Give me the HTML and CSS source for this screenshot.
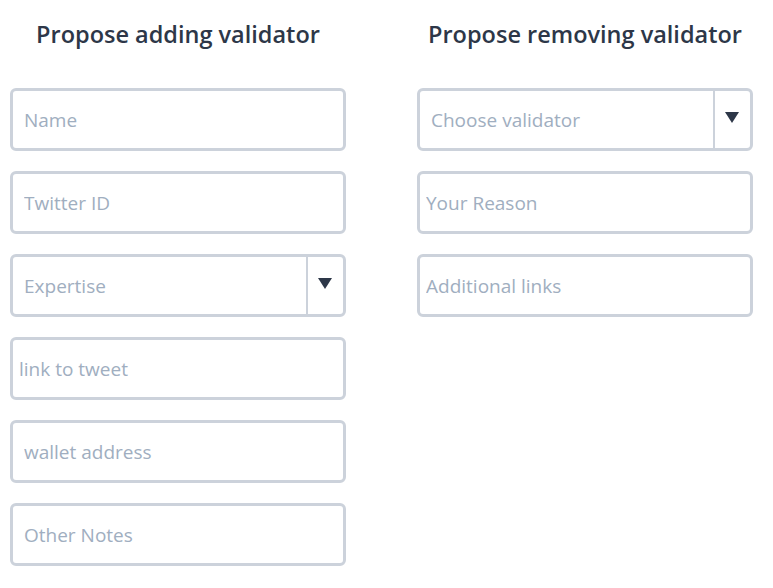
FILE: index.html
```html
<!DOCTYPE html>
<html>
<head>
<meta charset="utf-8">
<link rel="stylesheet" href="styles.css">
</head>
<body>
<div class="page">
  <section class="col">
    <h2 class="title">Propose adding validator</h2>
    <input class="field" type="text" placeholder="Name">
    <input class="field" type="text" placeholder="Twitter ID">
    <div class="select">
      <span class="select-text">Expertise</span>
      <span class="select-arrow"><svg width="14" height="11" viewBox="0 0 14 11"><path d="M0 0H14L7 11Z" fill="#2d3748"/></svg></span>
    </div>
    <input class="field field-tight" type="text" placeholder="link to tweet">
    <input class="field" type="text" placeholder="wallet address">
    <input class="field" type="text" placeholder="Other Notes">
  </section>
  <section class="col">
    <h2 class="title">Propose removing validator</h2>
    <div class="select">
      <span class="select-text">Choose validator</span>
      <span class="select-arrow"><svg width="14" height="11" viewBox="0 0 14 11"><path d="M0 0H14L7 11Z" fill="#2d3748"/></svg></span>
    </div>
    <input class="field field-tight" type="text" placeholder="Your Reason">
    <input class="field field-tight" type="text" placeholder="Additional links">
  </section>
</div>
</body>
</html>
```
FILE: styles.css
```css
* { box-sizing: border-box; }
html, body { margin: 0; background: #fff; }
body { font-family: "Open Sans", "DejaVu Sans", sans-serif; }
.page {
  display: grid;
  grid-template-columns: 336px 336px;
  column-gap: 71px;
  padding: 0 10px;
}
.col {
  display: flex;
  flex-direction: column;
  gap: 20px;
}
.title {
  margin: 0;
  height: 68px;
  padding-top: 17px;
  text-align: center;
  font-size: 23.5px;
  font-weight: 600;
  color: #2d3748;
  line-height: 34px;
}
.field, .select {
  height: 63px;
  width: 100%;
  border: 3px solid #ccd2db;
  border-radius: 6px;
  background: #fff;
}
.field {
  padding: 0 11px;
  font-family: inherit;
  font-size: 19px;
  color: #2d3748;
  outline: none;
}
.field-tight { padding: 0 6px; }
.field::placeholder { color: #a0aec0; opacity: 1; }
.select {
  display: flex;
  align-items: stretch;
}
.select-text {
  flex: 1;
  display: flex;
  align-items: center;
  padding: 0 11px;
  font-size: 19px;
  color: #a0aec0;
}
.select-arrow {
  width: 37px;
  border-left: 2px solid #ccd2db;
  display: flex;
  align-items: center;
  justify-content: center;
  padding-right: 2px;
}
.select-arrow svg { display: block; margin-top: -4px; }
```
